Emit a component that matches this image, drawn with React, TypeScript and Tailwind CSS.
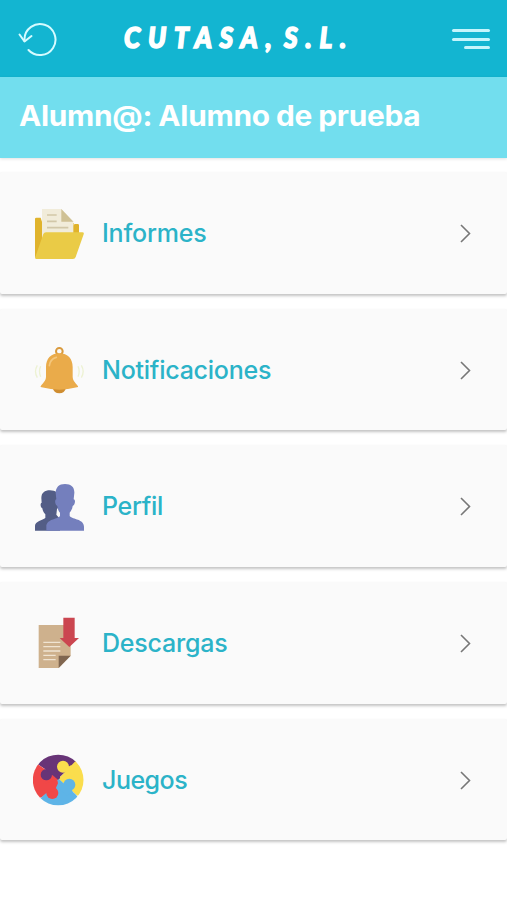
import type { ReactNode } from 'react';

function FolderIcon() {
  return (
    <svg className="size-[52px]" viewBox="39 36 156 156">
      <path d="M45 72q0-4 4-4h13l5 16h94v8q0-5 4-5h8q4 0 4 4v30L55 191q-10 0-10-8z" fill="#e0b32c" />
      <path d="M66 42h58l36 37v50H66z" fill="#f1ecda" />
      <path d="M124 42l36 38h-36z" fill="#cfc195" />
      <path d="M81 60h29M81 79h29M81 98h64" stroke="#d2c7a8" strokeWidth="5" />
      <path d="M78 112h109q6 0 4 6l-24 68q-2 6-8 6H49q-5 0-3-6l24-69q2-5 8-5z" fill="#eacb46" />
    </svg>
  );
}

function BellIcon() {
  return (
    <svg className="size-[52px]" viewBox="39 42 156 156">
      <path d="M52 106q-11 18 0 37M62 109q-7 15 0 31M184 106q11 18 0 37M174 109q7 15 0 31" fill="none" stroke="#edf2d3" strokeWidth="4" />
      <circle cx="118" cy="64" r="10" fill="none" stroke="#d99a3d" strokeWidth="6" />
      <path d="M98 174h40q-4 16-20 16t-20-16z" fill="#cf8d30" />
      <path d="M118 70c26 0 40 17 40 41v29c0 13 11 20 16 29q2 3-3 3-28 7-53 7t-53-7q-5 0-3-3c5-9 16-16 16-29v-29c0-24 14-41 40-41z" fill="#eaab4a" />
      <path d="M88 107q2-20 21-25" fill="none" stroke="#f4c77d" strokeWidth="5" strokeLinecap="round" />
    </svg>
  );
}

function PeopleIcon() {
  return (
    <svg className="size-[52px]" viewBox="39 29 156 156">
      <path d="M90 60c17 0 27 9 26 24l-1 15c4 2 1 13-4 17l-2 17 11 13v35H45v-14c0-15 23-17 31-24v-11c-5-5-8-11-9-18-6-2-7-15-2-17l-1-14c0-15 10-23 26-23z" fill="#535d86" />
      <path d="M135 41c19 0 29 10 28 27l-2 19c7 1 4 17-3 20-1 9-5 15-9 20v10c10 11 43 9 43 32v12H79v-12c0-23 31-21 41-32v-10c-5-5-7-11-8-20-7-3-9-18-3-20l-2-19c0-17 10-27 28-27z" fill="#747fbd" />
    </svg>
  );
}

function DownloadIcon() {
  return (
    <svg className="size-[52px]" viewBox="41 36 156 156">
      <path d="M58 60h96v92l-36 37H58z" fill="#ceb18d" />
      <path d="M118 152h36l-36 37z" fill="#806650" />
      <path d="M72 112h51M72 125h51M72 138h51M72 151h37M72 164h37" stroke="#f0e4d2" strokeWidth="4" />
      <path d="M132 38h34v61h13l-29 27-29-27h11z" fill="#cb4650" />
    </svg>
  );
}

function PuzzleIcon() {
  return (
    <svg className="size-[52px]" viewBox="39 27 156 156">
      <defs>
        <clipPath id="puzzle-disc">
          <circle cx="114.500" cy="105" r="76" />
        </clipPath>
      </defs>
      <g clipPath="url(#puzzle-disc)">
        <path d="M30 20h170L116 100 30 42z" fill="#683477" />
        <path d="M30 42l34 23 52 37-50 53-36 20z" fill="#f04747" />
        <path d="M174 40l40-20v160l-47-32-51-46z" fill="#fadd4d" />
        <path d="M116 101l52 48 32 41H30l36-35z" fill="#5eb4e7" />
        <circle cx="79" cy="89" r="17" fill="#683477" />
        <path d="M78 73l14-9 30 34-8 6-20-16z" fill="#683477" />
        <circle cx="129" cy="65" r="18" fill="#fadd4d" />
        <path d="M137 70l17-10 12 34-45 10-1-8 18-16z" fill="#fadd4d" />
        <circle cx="148" cy="119" r="18" fill="#5eb4e7" />
        <path d="M129 115l-13-11-10 16 34 32 18-11-5-15z" fill="#5eb4e7" />
        <circle cx="97" cy="144" r="18" fill="#f04747" />
        <path d="M80 143l-16 14-8-36 56-16 2 10-10 22z" fill="#f04747" />
      </g>
    </svg>
  );
}

const items: { label: string; icon: ReactNode; tracking: string }[] = [
  { label: 'Informes', icon: <FolderIcon />, tracking: 'tracking-[-0.2px]' },
  { label: 'Notificaciones', icon: <BellIcon />, tracking: 'tracking-[-0.240px]' },
  { label: 'Perfil', icon: <PeopleIcon />, tracking: 'tracking-[-0.3px]' },
  { label: 'Descargas', icon: <DownloadIcon />, tracking: 'tracking-[-0.2px]' },
  { label: 'Juegos', icon: <PuzzleIcon />, tracking: 'tracking-[-0.5px]' },
];

export default function App() {
  return (
    <div className="flex h-[900px] w-[507px] flex-col overflow-hidden bg-white font-['Inter',sans-serif]">
      <header className="flex h-[77px] shrink-0 items-center bg-[#13b5d1] pr-[17px] pl-[18px]">
        <svg className="h-[40px] w-[40px] shrink-0" viewBox="0 0 40 40" fill="none" stroke="#d5fbff" strokeWidth="2" strokeLinecap="round" strokeLinejoin="round">
          <path d="M6.500 22V20a15.500 15.500 0 1 1 4 11" />
          <path d="M1.500 15.500l5 7 7-5.500" />
        </svg>
        <h1 className="ml-[66px] flex-1 origin-left scale-x-[0.9] pb-[3px] text-[29px] leading-[36px] font-black tracking-[8.700px] whitespace-nowrap text-white italic font-['Lato',sans-serif] [-webkit-text-stroke:1.6px_white] [word-spacing:-10px]">
          CUTASA, S.L.
        </h1>
        <div className="flex w-[38px] shrink-0 flex-col items-end gap-[5.500px] pt-[1px]">
          <span className="h-[3px] w-full rounded-full bg-[#c5f5fc]" />
          <span className="h-[3px] w-full rounded-full bg-[#c5f5fc]" />
          <span className="h-[3px] w-[26px] rounded-full bg-[#c5f5fc]" />
        </div>
      </header>
      <div className="flex h-[81px] shrink-0 items-center bg-[#72deee] pb-[4px] pl-[19px] shadow-[0_1px_3px_rgba(0,0,0,0.12)]">
        <h2 className="origin-left scale-x-[1.065] text-[28px] font-bold tracking-[-0.250px] whitespace-nowrap text-white [word-spacing:-0.5px]">Alumn@: Alumno de prueba</h2>
      </div>
      <main className="flex flex-col gap-[15px] pt-[14px]">
        {items.map((item) => (
          <a key={item.label} className="flex h-[121.700px] items-center rounded-[2px] bg-[#fafafa] pr-[36px] pl-[33px] shadow-[0_2px_3px_rgba(0,0,0,0.24)]">
            {item.icon}
            <span className={`ml-[17px] flex-1 text-[25px] leading-[32px] font-medium text-[#2bb3c8] ${item.tracking}`}>{item.label}</span>
            <svg className="h-[20px] w-[11px]" viewBox="0 0 11 20" fill="none" stroke="#777" strokeWidth="1.600">
              <path d="M1 2l8.500 8.500L1 19" />
            </svg>
          </a>
        ))}
      </main>
    </div>
  );
}
